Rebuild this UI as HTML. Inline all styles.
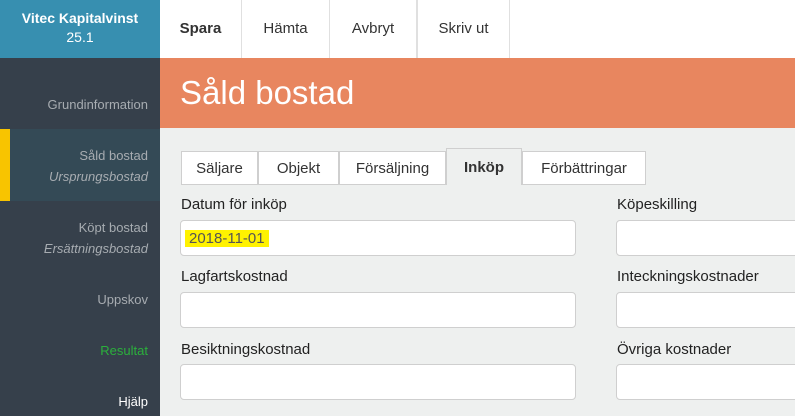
<!DOCTYPE html>
<html><head><meta charset="utf-8"><style>
*{box-sizing:border-box;margin:0;padding:0}
body{width:795px;height:416px;overflow:hidden;font-family:"Liberation Sans","DejaVu Sans",sans-serif;background:#eef0ef;position:relative}
.a{position:absolute}
.logo{left:0;top:0;width:160px;height:58px;background:#378fb0;color:#fff;text-align:center;font-size:14px;line-height:19px;padding-top:9px}
.side{left:0;top:58px;width:160px;height:358px;background:#36404b}
.si{position:absolute;left:0;width:148px;text-align:right;font-size:13px;color:#a7acb1;line-height:21px}
.sel{left:0;top:129px;width:160px;height:72px;background:#344a56}
.bar{left:0;top:129px;width:10px;height:72px;background:#f8c400}
.nav{left:160px;top:0;width:635px;height:58px;background:#fff}
.nb{position:absolute;top:0;height:58px;line-height:58px;text-align:center;font-size:15px;color:#333;border-right:1px solid #e0e0e0}
.ban{left:160px;top:58px;width:635px;height:70px;background:#e8865f;color:#fff;font-size:33px;padding-left:20px;line-height:70px;font-weight:300}
.tab{position:absolute;top:151px;height:34px;background:#fff;border:1px solid #cfcfcf;font-size:15px;color:#333;text-align:center;line-height:33px}
.lbl{position:absolute;font-size:15px;color:#222}
.in{position:absolute;height:36px;background:#fff;border:1px solid #cfcfcf;border-radius:4px}
</style></head><body>
<div class="a logo"><b>Vitec Kapitalvinst</b><br>25.1</div>
<div class="a side"></div>
<div class="a sel"></div><div class="a bar"></div>
<div class="si" style="top:94px">Grundinformation</div>
<div class="si" style="top:145px">Såld bostad<br><i>Ursprungsbostad</i></div>
<div class="si" style="top:217px">Köpt bostad<br><i>Ersättningsbostad</i></div>
<div class="si" style="top:289px">Uppskov</div>
<div class="si" style="top:340px;color:#2bb03c">Resultat</div>
<div class="si" style="top:391px;color:#fff">Hjälp</div>
<div class="a nav">
<div class="nb" style="left:0;width:82px;font-weight:bold">Spara</div>
<div class="nb" style="left:82px;width:88px">Hämta</div>
<div class="nb" style="left:170px;width:87px">Avbryt</div>
<div class="nb" style="left:257px;width:93px;border-left:1px solid #e0e0e0">Skriv ut</div>
</div>
<div class="a ban">Såld bostad</div>
<div class="tab" style="left:181px;width:77px">Säljare</div>
<div class="tab" style="left:258px;width:81px">Objekt</div>
<div class="tab" style="left:339px;width:107px">Försäljning</div>
<div class="tab" style="left:446px;top:148px;height:37px;width:76px;background:#eef0ef;border-bottom:none;font-weight:bold;line-height:38px">Inköp</div>
<div class="tab" style="left:522px;width:124px">Förbättringar</div>
<div class="lbl" style="left:181px;top:196px">Datum för inköp</div>
<div class="in" style="left:180px;top:220px;width:396px"><span style="position:absolute;left:4px;top:9px;background:#fff200;color:#555;font-size:15px;line-height:17px;padding:0 4px">2018-11-01</span></div>
<div class="lbl" style="left:181px;top:268px">Lagfartskostnad</div>
<div class="in" style="left:180px;top:292px;width:396px"></div>
<div class="lbl" style="left:181px;top:341px">Besiktningskostnad</div>
<div class="in" style="left:180px;top:364px;width:396px"></div>
<div class="lbl" style="left:617px;top:196px">Köpeskilling</div>
<div class="in" style="left:616px;top:220px;width:200px"></div>
<div class="lbl" style="left:617px;top:268px">Inteckningskostnader</div>
<div class="in" style="left:616px;top:292px;width:200px"></div>
<div class="lbl" style="left:617px;top:341px">Övriga kostnader</div>
<div class="in" style="left:616px;top:364px;width:200px"></div>
</body></html>
